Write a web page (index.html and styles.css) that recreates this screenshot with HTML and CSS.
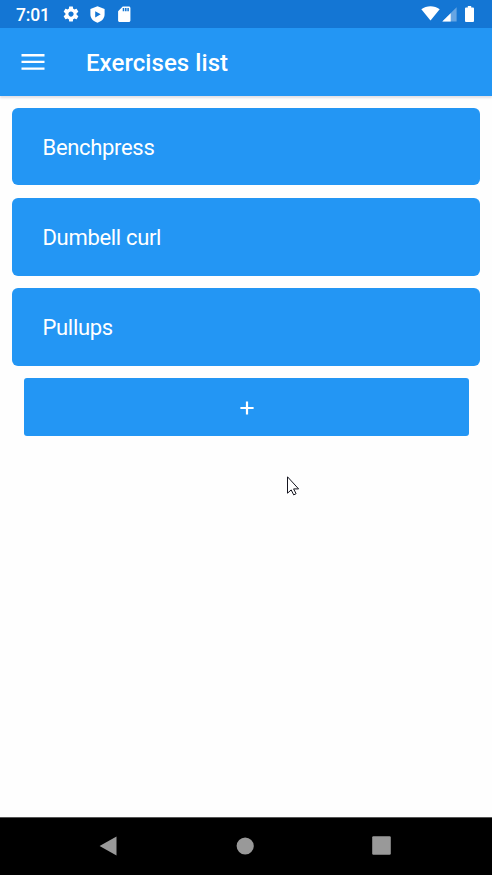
FILE: index.html
```
<!DOCTYPE html>
<html lang="en">
<head>
<meta charset="utf-8">
<title>Exercises list</title>
<link rel="stylesheet" href="styles.css">
</head>
<body>
<div class="status">
  <span class="time">7:01</span>
  <svg class="gear" viewBox="0 0 24 24"><path d="M19.43 12.98c.04-.32.07-.64.07-.98s-.03-.66-.07-.98l2.11-1.65c.19-.15.24-.42.12-.64l-2-3.46c-.12-.22-.39-.3-.61-.22l-2.49 1c-.52-.4-1.08-.73-1.69-.98l-.38-2.65C14.46 2.18 14.25 2 14 2h-4c-.25 0-.46.18-.49.42l-.38 2.65c-.61.25-1.17.59-1.69.98l-2.49-1c-.23-.09-.49 0-.61.22l-2 3.46c-.13.22-.07.49.12.64l2.11 1.65c-.04.32-.07.65-.07.98s.03.66.07.98l-2.11 1.65c-.19.15-.24.42-.12.64l2 3.46c.12.22.39.3.61.22l2.49-1c.52.4 1.08.73 1.69.98l.38 2.65c.03.24.24.42.49.42h4c.25 0 .46-.18.49-.42l.38-2.65c.61-.25 1.17-.59 1.69-.98l2.49 1c.23.09.49 0 .61-.22l2-3.46c.12-.22.07-.49-.12-.64l-2.11-1.65zM12 15.5c-1.93 0-3.5-1.57-3.5-3.5s1.57-3.5 3.5-3.5 3.5 1.57 3.5 3.5-1.57 3.5-3.5 3.5z"/></svg>
  <svg class="shield" viewBox="0 0 15 17"><path fill-rule="evenodd" d="M7.5.3 14.6 3v5.2c0 4-2.6 7-7.1 8.5C3 15.2.4 12.2.4 8.2V3zM5.200 5.200v6.200l5.500-3.100z"/></svg>
  <svg class="sd" viewBox="0 0 24 24"><path d="M18 2h-8L4.020 8 4 20c0 1.100.9 2 2 2h12c1.100 0 2-.9 2-2V4c0-1.100-.9-2-2-2zm-6 6h-2V4h2v4zm3 0h-2V4h2v4zm3 0h-2V4h2v4z"/></svg>
  <svg class="wifi" viewBox="0 0 19 15"><path d="M.3 3.300C5.500-.8 13.500-.8 18.700 3.300L9.500 14.600z"/></svg>
  <svg class="signal" viewBox="0 0 15 15"><path opacity=".35" d="M14.600.3v14.300H.3z"/><path d="M8.700 6.200v8.400H.3z"/></svg>
  <svg class="battery" viewBox="0 0 9 16"><path d="M2.800 0h3.400v1.500H8q1 0 1 1V15q0 1-1 1H1q-1 0-1-1V2.500q0-1 1-1h1.800z"/></svg>
</div>
<header class="appbar">
  <svg class="menu" viewBox="0 0 24 16"><path d="M.5 0h23v2.400H.5zM.5 6.700h23v2.400H.5zM.5 13.400h23v2.400H.5z"/></svg>
  <h1>Exercises list</h1>
</header>
<main class="list">
  <div class="card">Benchpress</div>
  <div class="card">Dumbell curl</div>
  <div class="card">Pullups</div>
  <button class="add" aria-label="Add exercise"><svg viewBox="0 0 14 14"><path d="M5.900.4h2.200v5.500h5.500v2.200H8.100v5.500H5.900V8.100H.4V5.900h5.500z"/></svg></button>
</main>
<nav class="navbar">
  <svg class="back" viewBox="0 0 18 20"><path d="M17.500.6v18.800L.6 10z"/></svg>
  <svg class="home" viewBox="0 0 18 18"><circle cx="9.200" cy="9" r="8.600"/></svg>
  <svg class="recent" viewBox="0 0 19 19"><rect x=".2" y=".2" width="18.600" height="18.600" rx="1.200"/></svg>
</nav>
<svg class="cursor" viewBox="0 0 13 20"><path d="M.5.8v16.400l3.700-3.300 2.500 5 2.400-1.200-2.500-4.800h5z"/></svg>
</body>
</html>
```
FILE: styles.css
```
* { box-sizing: border-box; }
body {
  margin: 0;
  height: 875px;
  display: flex;
  flex-direction: column;
  overflow: hidden;
  background: #fefefe;
  color: #fff;
  font-family: Roboto, sans-serif;
}
svg { display: block; fill: #fff; flex: none; }
.status {
  height: 28px;
  flex: none;
  display: flex;
  align-items: center;
  padding: 0 18px 0 16px;
  background: #1476d4;
}
.time { width: 46px; font-size: 17.5px; font-weight: 500; letter-spacing: -.2px; line-height: 28px; padding-top: 1px; }
.gear { width: 18px; height: 18px; }
.shield { width: 15px; height: 17px; margin-left: 10px; }
.sd { width: 18.5px; height: 18.5px; margin-left: 9.5px; }
.wifi { width: 19px; height: 15px; margin-left: auto; margin-top: -1px; }
.signal { width: 15px; height: 15px; margin-left: 2px; }
.battery { width: 9px; height: 16px; margin-left: 8px; margin-top: -1px; }
.appbar {
  height: 67.5px;
  flex: none;
  display: flex;
  align-items: center;
  padding-left: 21px;
  background: #2396f4;
  box-shadow: 0 2px 2px rgba(0, 0, 60, .12);
}
.menu { width: 24px; height: 16px; }
h1 { margin: 2px 0 0 41px; font-size: 24px; font-weight: 500; line-height: 28px; letter-spacing: .06px; }
.list {
  flex: 1;
  display: flex;
  flex-direction: column;
  gap: 12.5px;
  padding: 12px 12px 0;
}
.card {
  height: 77.75px;
  flex: none;
  display: flex;
  align-items: center;
  padding: 1.6px 30.5px 0;
  border-radius: 6px;
  background: #2396f4;
  font-size: 22px;
  letter-spacing: -.32px;
}
.add {
  height: 57.5px;
  margin: 0 11.5px 0 12.25px;
  padding: 2.5px 0 0;
  display: flex;
  align-items: center;
  justify-content: center;
  border: 0;
  border-radius: 3px;
  background: #2396f4;
}
.add svg { width: 14px; height: 14px; margin-left: .6px; }
.navbar {
  height: 58px;
  flex: none;
  display: flex;
  align-items: center;
  padding: 0 0 2px 99px;
  background: #000;
  border-top: 1px solid #555;
}
.navbar svg { fill: #999; }
.back { width: 18px; height: 20px; }
.home { width: 18px; height: 18px; margin-left: 119px; }
.recent { width: 19px; height: 19px; margin-left: 118px; }
.cursor {
  position: absolute;
  left: 287px;
  top: 476px;
  width: 13px;
  height: 20px;
  stroke: #15151f;
  stroke-width: 1;
}
```
